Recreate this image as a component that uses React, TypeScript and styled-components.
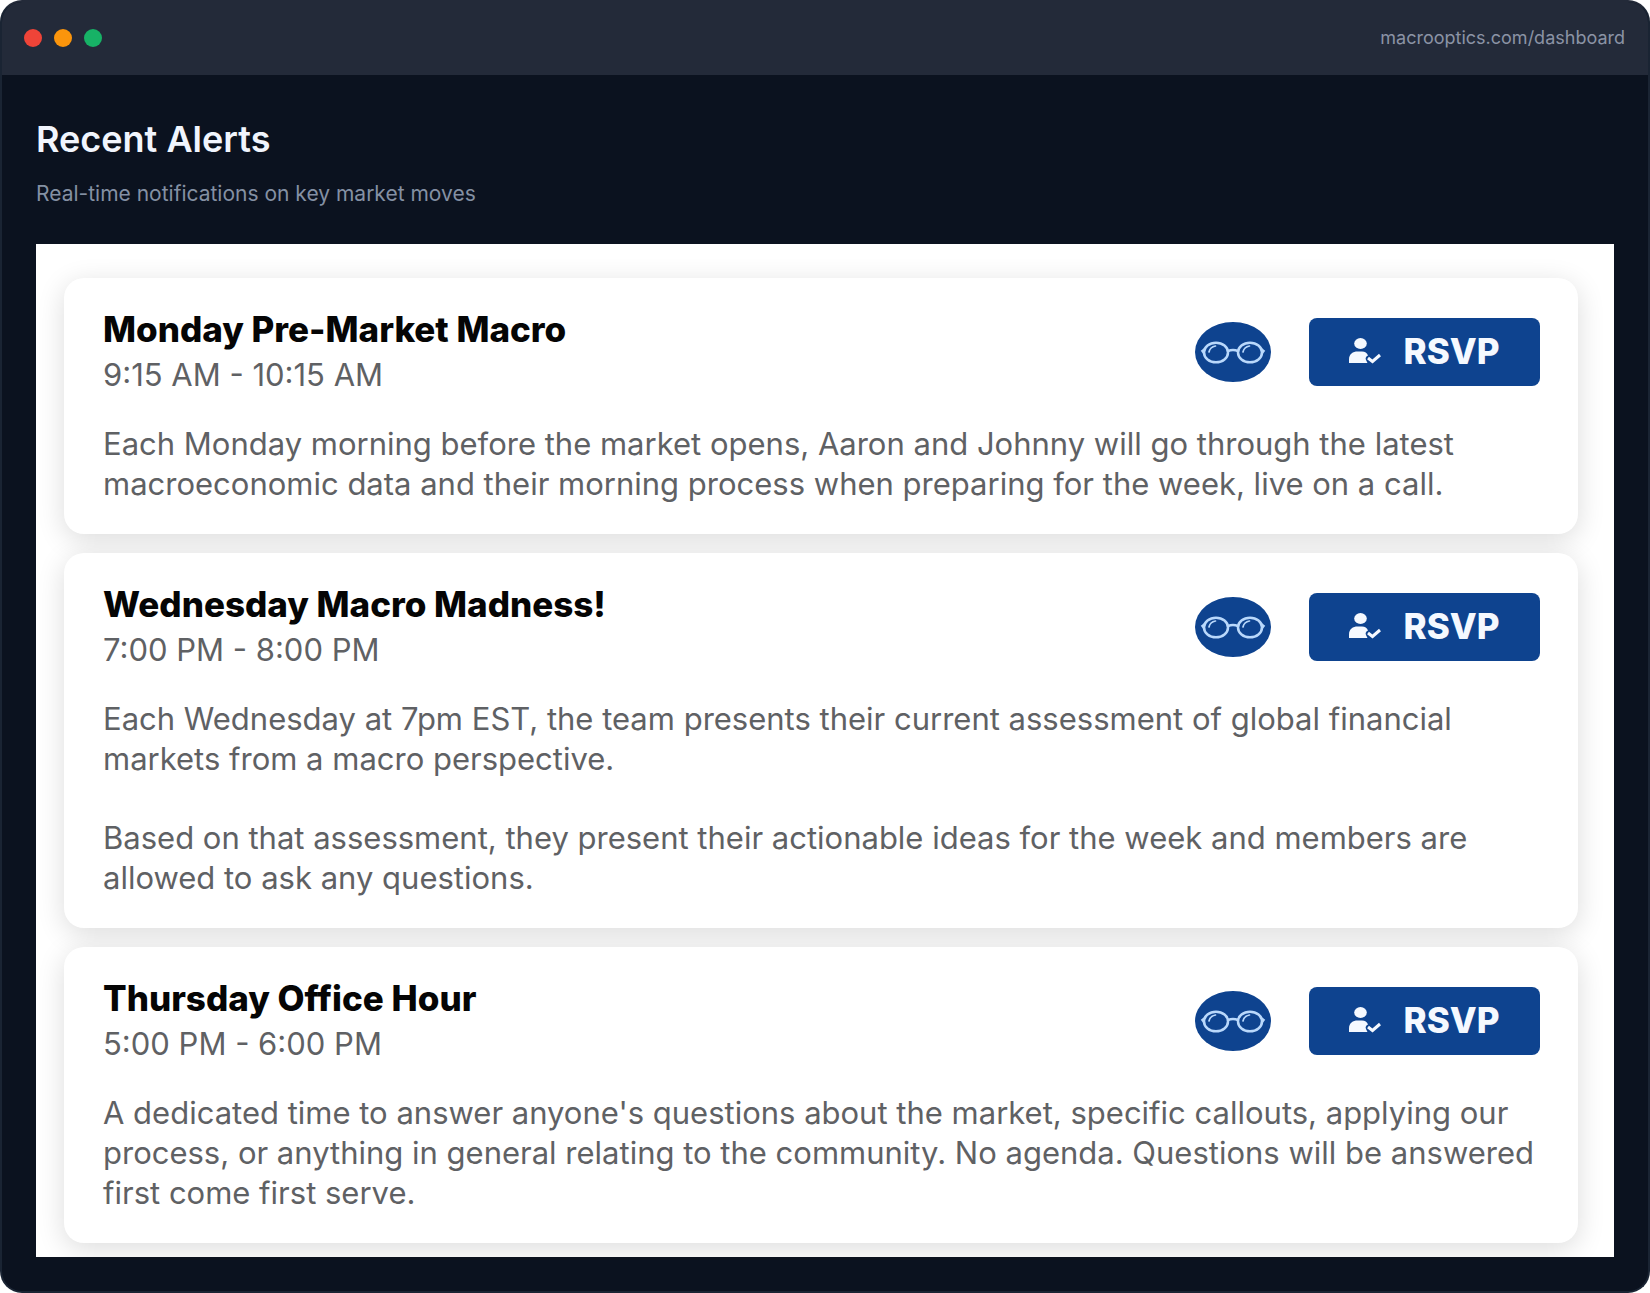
import React from "react";
import styled, { createGlobalStyle } from "styled-components";

const GlobalStyle = createGlobalStyle`
  *, *::before, *::after { box-sizing: border-box; }
  body { margin: 0; background: #ffffff; font-family: Inter, "Liberation Sans", sans-serif; }
  h1, h2, p { margin: 0; }
`;

const Window = styled.main`
  min-height: 100vh;
  display: flex;
  flex-direction: column;
  overflow: hidden;
  border: 2px solid #1a2433;
  border-top-color: #232a39;
  border-radius: 22px;
  background: #0b121f;
`;

const TitleBar = styled.header`
  display: flex;
  align-items: center;
  justify-content: space-between;
  height: 73px;
  padding: 0 23px 2px 22px;
  background: #232a39;
`;

const Lights = styled.div`
  display: flex;
  gap: 12px;
`;

const Light = styled.span<{ $color: string }>`
  width: 18px;
  height: 18px;
  border-radius: 50%;
  background: ${(p) => p.$color};
`;

const Address = styled.span`
  font-size: 18px;
  line-height: 24px;
  color: #8b93a5;
`;

const Content = styled.div`
  flex: 1;
  display: flex;
  flex-direction: column;
  padding: 40px 34px 34px;
`;

const Heading = styled.h1`
  font-size: 36px;
  line-height: 48px;
  font-weight: 600;
  color: #f1f5fd;
`;

const Subheading = styled.p`
  margin: 17px 0 36px;
  font-size: 21px;
  line-height: 28px;
  color: #8490a3;
`;

const Panel = styled.section`
  flex: 1;
  display: flex;
  flex-direction: column;
  gap: 19px;
  padding: 34px 36px 13px 28px;
  overflow: hidden;
  background: #ffffff;
`;

const Card = styled.article`
  padding: 31px 38px 30px 39px;
  border-radius: 20px;
  background: #ffffff;
  box-shadow: 0 6px 28px rgba(0, 0, 0, 0.14);
`;

const CardHead = styled.div`
  display: flex;
  align-items: center;
  justify-content: space-between;
  margin-bottom: 29px;
`;

const Title = styled.h2`
  margin-bottom: 6px;
  font-size: 35px;
  line-height: 40px;
  font-weight: 800;
  color: #050505;
`;

const Time = styled.p`
  font-size: 31px;
  line-height: 40px;
  color: #5f6164;
`;

const Actions = styled.div`
  display: flex;
  align-items: center;
  gap: 38px;
`;

const RsvpButton = styled.button`
  display: flex;
  align-items: center;
  justify-content: center;
  gap: 22px;
  width: 231px;
  height: 68px;
  padding: 0 0 2px;
  border: 0;
  border-radius: 8px;
  background: #0e438f;
  color: #f5f9ff;
  font-family: inherit;
  font-size: 35px;
  font-weight: 800;
  cursor: pointer;
`;

const Body = styled.p`
  font-size: 31px;
  line-height: 40px;
  color: #5f6164;

  & + & { margin-top: 39px; }
`;

const Glasses = () => (
  <svg width="76" height="60" viewBox="0 0 76 60" role="img" aria-label="Glasses">
    <ellipse cx="38" cy="30" rx="38" ry="30" fill="#0e438f" />
    <g fill="none" stroke="#b9d8fb" strokeWidth="2.5" strokeLinecap="round">
      <ellipse cx="21" cy="30.5" rx="12" ry="9.8" />
      <ellipse cx="55" cy="30.5" rx="12" ry="9.8" />
      <path d="M33 29q5-2 10 0" />
      <path d="M10 27l-2.5 2 1.5 2M66 27l2.5 2-1.5 2" />
      <path d="M14 30q1-5 6.5-6M48 30q1-5 6.5-6" strokeWidth="1.7" />
    </g>
  </svg>
);

const PersonCheck = () => (
  <svg width="32" height="26" viewBox="0 0 32 26" aria-hidden="true" fill="#f5f9ff">
    <ellipse cx="11.5" cy="5.5" rx="6.3" ry="5.4" />
    <path d="M0 25v-3.5C0 16 4 13.5 8.500 13.500h4.500c3 0 5 1.500 6 4-2 1-3 2.500-2 4.500l1.500 3z" />
    <path d="M19 20l4.500 3.500 7.500-6.500" fill="none" stroke="#f5f9ff" strokeWidth="3" />
  </svg>
);

const events = [
  {
    title: "Monday Pre-Market Macro",
    time: "9:15 AM - 10:15 AM",
    body: [
      "Each Monday morning before the market opens, Aaron and Johnny will go through the latest macroeconomic data and their morning process when preparing for the week, live on a call.",
    ],
  },
  {
    title: "Wednesday Macro Madness!",
    time: "7:00 PM - 8:00 PM",
    body: [
      "Each Wednesday at 7pm EST, the team presents their current assessment of global financial markets from a macro perspective.",
      "Based on that assessment, they present their actionable ideas for the week and members are allowed to ask any questions.",
    ],
  },
  {
    title: "Thursday Office Hour",
    time: "5:00 PM - 6:00 PM",
    body: [
      "A dedicated time to answer anyone's questions about the market, specific callouts, applying our process, or anything in general relating to the community. No agenda. Questions will be answered first come first serve.",
    ],
  },
];

export default function App() {
  return (
    <>
      <GlobalStyle />
      <Window>
        <TitleBar>
          <Lights>
            <Light $color="#ef4438" />
            <Light $color="#fb950c" />
            <Light $color="#17b266" />
          </Lights>
          <Address>macrooptics.com/dashboard</Address>
        </TitleBar>
        <Content>
          <Heading>Recent Alerts</Heading>
          <Subheading>Real-time notifications on key market moves</Subheading>
          <Panel>
            {events.map((event) => (
              <Card key={event.title}>
                <CardHead>
                  <div>
                    <Title>{event.title}</Title>
                    <Time>{event.time}</Time>
                  </div>
                  <Actions>
                    <Glasses />
                    <RsvpButton type="button">
                      <PersonCheck />
                      RSVP
                    </RsvpButton>
                  </Actions>
                </CardHead>
                {event.body.map((text) => (
                  <Body key={text}>{text}</Body>
                ))}
              </Card>
            ))}
          </Panel>
        </Content>
      </Window>
    </>
  );
}
